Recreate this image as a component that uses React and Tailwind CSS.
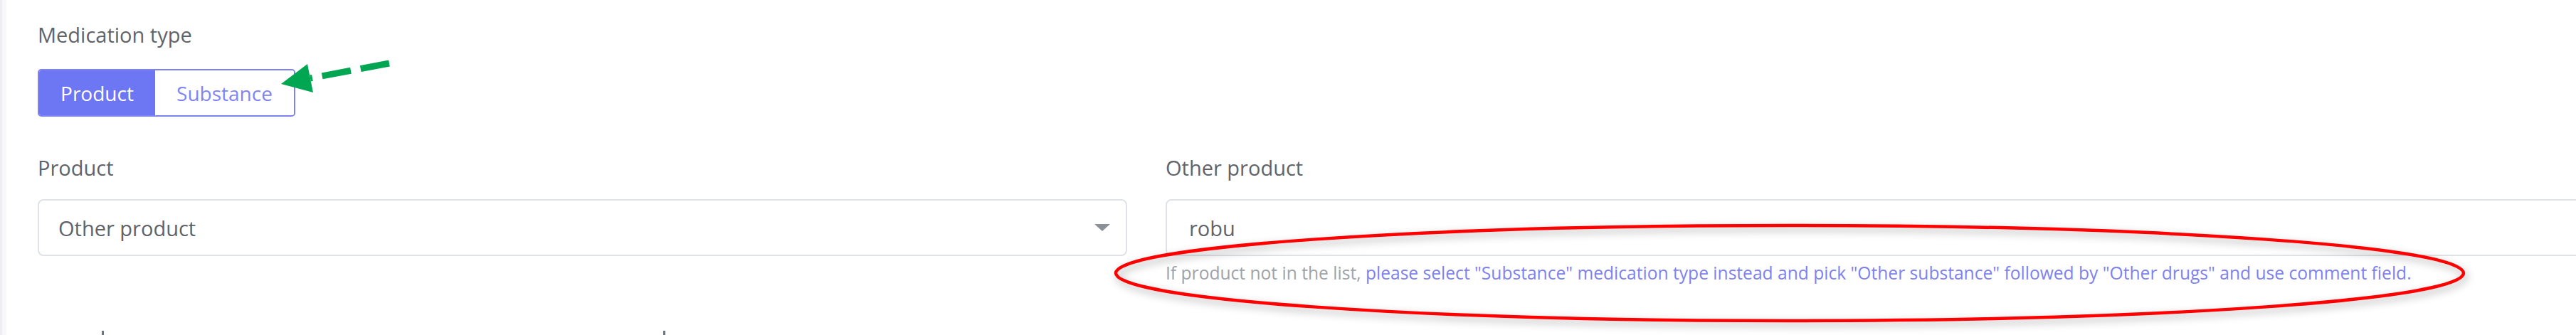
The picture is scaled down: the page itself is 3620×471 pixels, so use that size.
import React from "react";

const font = { fontFamily: '"Open Sans", "Noto Sans", Arial, sans-serif' };

export default function App() {
  return (
    <div
      className="relative w-[3620px] h-[471px] overflow-hidden bg-white flex"
      style={font}
    >
      <div className="w-[3px] shrink-0 h-full bg-[#eceef3]" />
      <div className="w-[6px] shrink-0 h-full bg-[#f8f8fb]" />
      <div className="shrink-0 flex flex-col pl-[44px]">
        <p className="mt-[34px] text-[29px] leading-[29px] text-[#5f636a] whitespace-nowrap">
          Medication type
        </p>
        <div className="mt-[34px] h-[68px] w-[362px] flex border-2 border-[#7c82f2] rounded-[5px] overflow-hidden">
          <div className="w-[163px] h-full bg-[#6e77f3] flex items-center justify-center text-white text-[28px] leading-[28px]">
            Product
          </div>
          <div className="flex-1 h-full bg-white flex items-center justify-center text-[#7f85f3] text-[28px] leading-[28px]">
            Substance
          </div>
        </div>
        <div className="mt-[57px] flex gap-[54px]">
          <div className="w-[1531px] shrink-0 flex flex-col">
            <p className="text-[29px] leading-[29px] text-[#5f636a]">Product</p>
            <div className="mt-[30px] h-[80px] border-2 border-[#dfe2e6] rounded-[8px] flex items-center justify-between pl-[27px] pr-[22px]">
              <span className="text-[29px] leading-[29px] text-[#5f636a]">Other product</span>
              <svg width="22" height="10" viewBox="0 0 22 10">
                <polygon points="0,0 22,0 11,10" fill="#8c9197" />
              </svg>
            </div>
          </div>
          <div className="w-[2100px] shrink-0 flex flex-col">
            <p className="text-[29px] leading-[29px] text-[#5f636a]">Other product</p>
            <div className="mt-[30px] h-[80px] border-2 border-[#dfe2e6] rounded-[8px] flex items-center pl-[31px]">
              <span className="text-[29px] leading-[29px] text-[#5f636a]">robu</span>
            </div>
            <p className="mt-[12px] text-[24.6px] leading-[24px] whitespace-nowrap text-[#7d82f0]">
              <span className="text-[#9ea3aa]">If product not in the list,</span>{" "}
              please select "Substance" medication type instead and pick "Other substance" followed by "Other drugs" and use comment field.
            </p>
          </div>
        </div>
        <div className="mt-[69px] flex">
          <div className="ml-[90px] w-[3px] h-[6px] bg-[#6d7480]" />
          <div className="ml-[786px] w-[3px] h-[6px] bg-[#6d7480]" />
        </div>
      </div>

      <svg
        className="absolute inset-0 pointer-events-none"
        width="3620"
        height="471"
        viewBox="0 0 3620 471"
      >
        <defs>
          <filter id="sh" x="-10%" y="-50%" width="120%" height="200%">
            <feDropShadow dx="3" dy="5" stdDeviation="6" floodColor="#000" floodOpacity="0.32" />
          </filter>
        </defs>
        <ellipse
          cx="2515"
          cy="384"
          rx="947"
          ry="67"
          fill="none"
          stroke="#ff0000"
          strokeWidth="4.5"
          filter="url(#sh)"
        />
        <line
          x1="547"
          y1="89"
          x2="436"
          y2="110"
          stroke="#00a651"
          strokeWidth="9"
          strokeDasharray="41 14"
        />
        <polygon points="395,118 432,90 440,130" fill="#00a651" />
      </svg>
    </div>
  );
}
